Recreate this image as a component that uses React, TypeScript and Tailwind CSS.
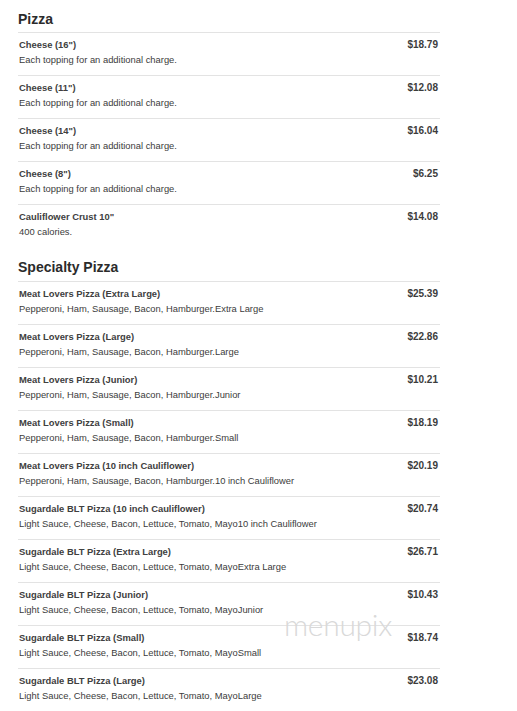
import React from "react";

type Item = { name: string; desc: string; price: string };

const pizza: Item[] = [
  { name: 'Cheese (16")', desc: "Each topping for an additional charge.", price: "$18.79" },
  { name: 'Cheese (11")', desc: "Each topping for an additional charge.", price: "$12.08" },
  { name: 'Cheese (14")', desc: "Each topping for an additional charge.", price: "$16.04" },
  { name: 'Cheese (8")', desc: "Each topping for an additional charge.", price: "$6.25" },
  { name: 'Cauliflower Crust 10"', desc: "400 calories.", price: "$14.08" },
];

const specialty: Item[] = [
  { name: "Meat Lovers Pizza (Extra Large)", desc: "Pepperoni, Ham, Sausage, Bacon, Hamburger.Extra Large", price: "$25.39" },
  { name: "Meat Lovers Pizza (Large)", desc: "Pepperoni, Ham, Sausage, Bacon, Hamburger.Large", price: "$22.86" },
  { name: "Meat Lovers Pizza (Junior)", desc: "Pepperoni, Ham, Sausage, Bacon, Hamburger.Junior", price: "$10.21" },
  { name: "Meat Lovers Pizza (Small)", desc: "Pepperoni, Ham, Sausage, Bacon, Hamburger.Small", price: "$18.19" },
  { name: "Meat Lovers Pizza (10 inch Cauliflower)", desc: "Pepperoni, Ham, Sausage, Bacon, Hamburger.10 inch Cauliflower", price: "$20.19" },
  { name: "Sugardale BLT Pizza (10 inch Cauliflower)", desc: "Light Sauce, Cheese, Bacon, Lettuce, Tomato, Mayo10 inch Cauliflower", price: "$20.74" },
  { name: "Sugardale BLT Pizza (Extra Large)", desc: "Light Sauce, Cheese, Bacon, Lettuce, Tomato, MayoExtra Large", price: "$26.71" },
  { name: "Sugardale BLT Pizza (Junior)", desc: "Light Sauce, Cheese, Bacon, Lettuce, Tomato, MayoJunior", price: "$10.43" },
  { name: "Sugardale BLT Pizza (Small)", desc: "Light Sauce, Cheese, Bacon, Lettuce, Tomato, MayoSmall", price: "$18.74" },
  { name: "Sugardale BLT Pizza (Large)", desc: "Light Sauce, Cheese, Bacon, Lettuce, Tomato, MayoLarge", price: "$23.08" },
];

function Row({ item, last }: { item: Item; last?: boolean }) {
  return (
    <div
      className={
        "flex justify-between border-t border-[#e3e3e3] pt-[4px] pb-[8px] pl-[1px] " +
        (last ? "border-b" : "")
      }
    >
      <div className="flex flex-col">
        <div className="text-[9.4px] leading-[15px] font-bold text-[#404040]">{item.name}</div>
        <div className="text-[9.4px] leading-[15px] text-[#3c3c3c]">{item.desc}</div>
      </div>
      <div className="text-[10px] leading-[15px] font-bold text-[#3c3c3c] pr-[2px]">{item.price}</div>
    </div>
  );
}

export default function App() {
  return (
    <div
      className="relative w-[517px] h-[711px] overflow-hidden bg-white"
      style={{ fontFamily: '"Liberation Sans", Arial, sans-serif' }}
    >
      <div className="ml-[18px] w-[422px]">
        <h2 className="pt-[9px] pb-[3px] text-[14px] leading-[20px] font-bold text-[#2b2b2b]">Pizza</h2>
        {pizza.map((it, i) => (
          <Row key={i} item={it} />
        ))}
        <h2 className="pt-[10px] pb-[4px] text-[14px] leading-[20px] font-bold text-[#2b2b2b]">Specialty Pizza</h2>
        {specialty.map((it, i) => (
          <Row key={i} item={it} last={i === specialty.length - 1} />
        ))}
      </div>
      <div
        className="absolute left-[284px] top-[604px] text-[30px] leading-[40px] font-light tracking-[-0.3px] text-[#d9d9d9] select-none"
        style={{ fontFamily: "Lato, sans-serif" }}
      >
        menupix
      </div>
    </div>
  );
}
